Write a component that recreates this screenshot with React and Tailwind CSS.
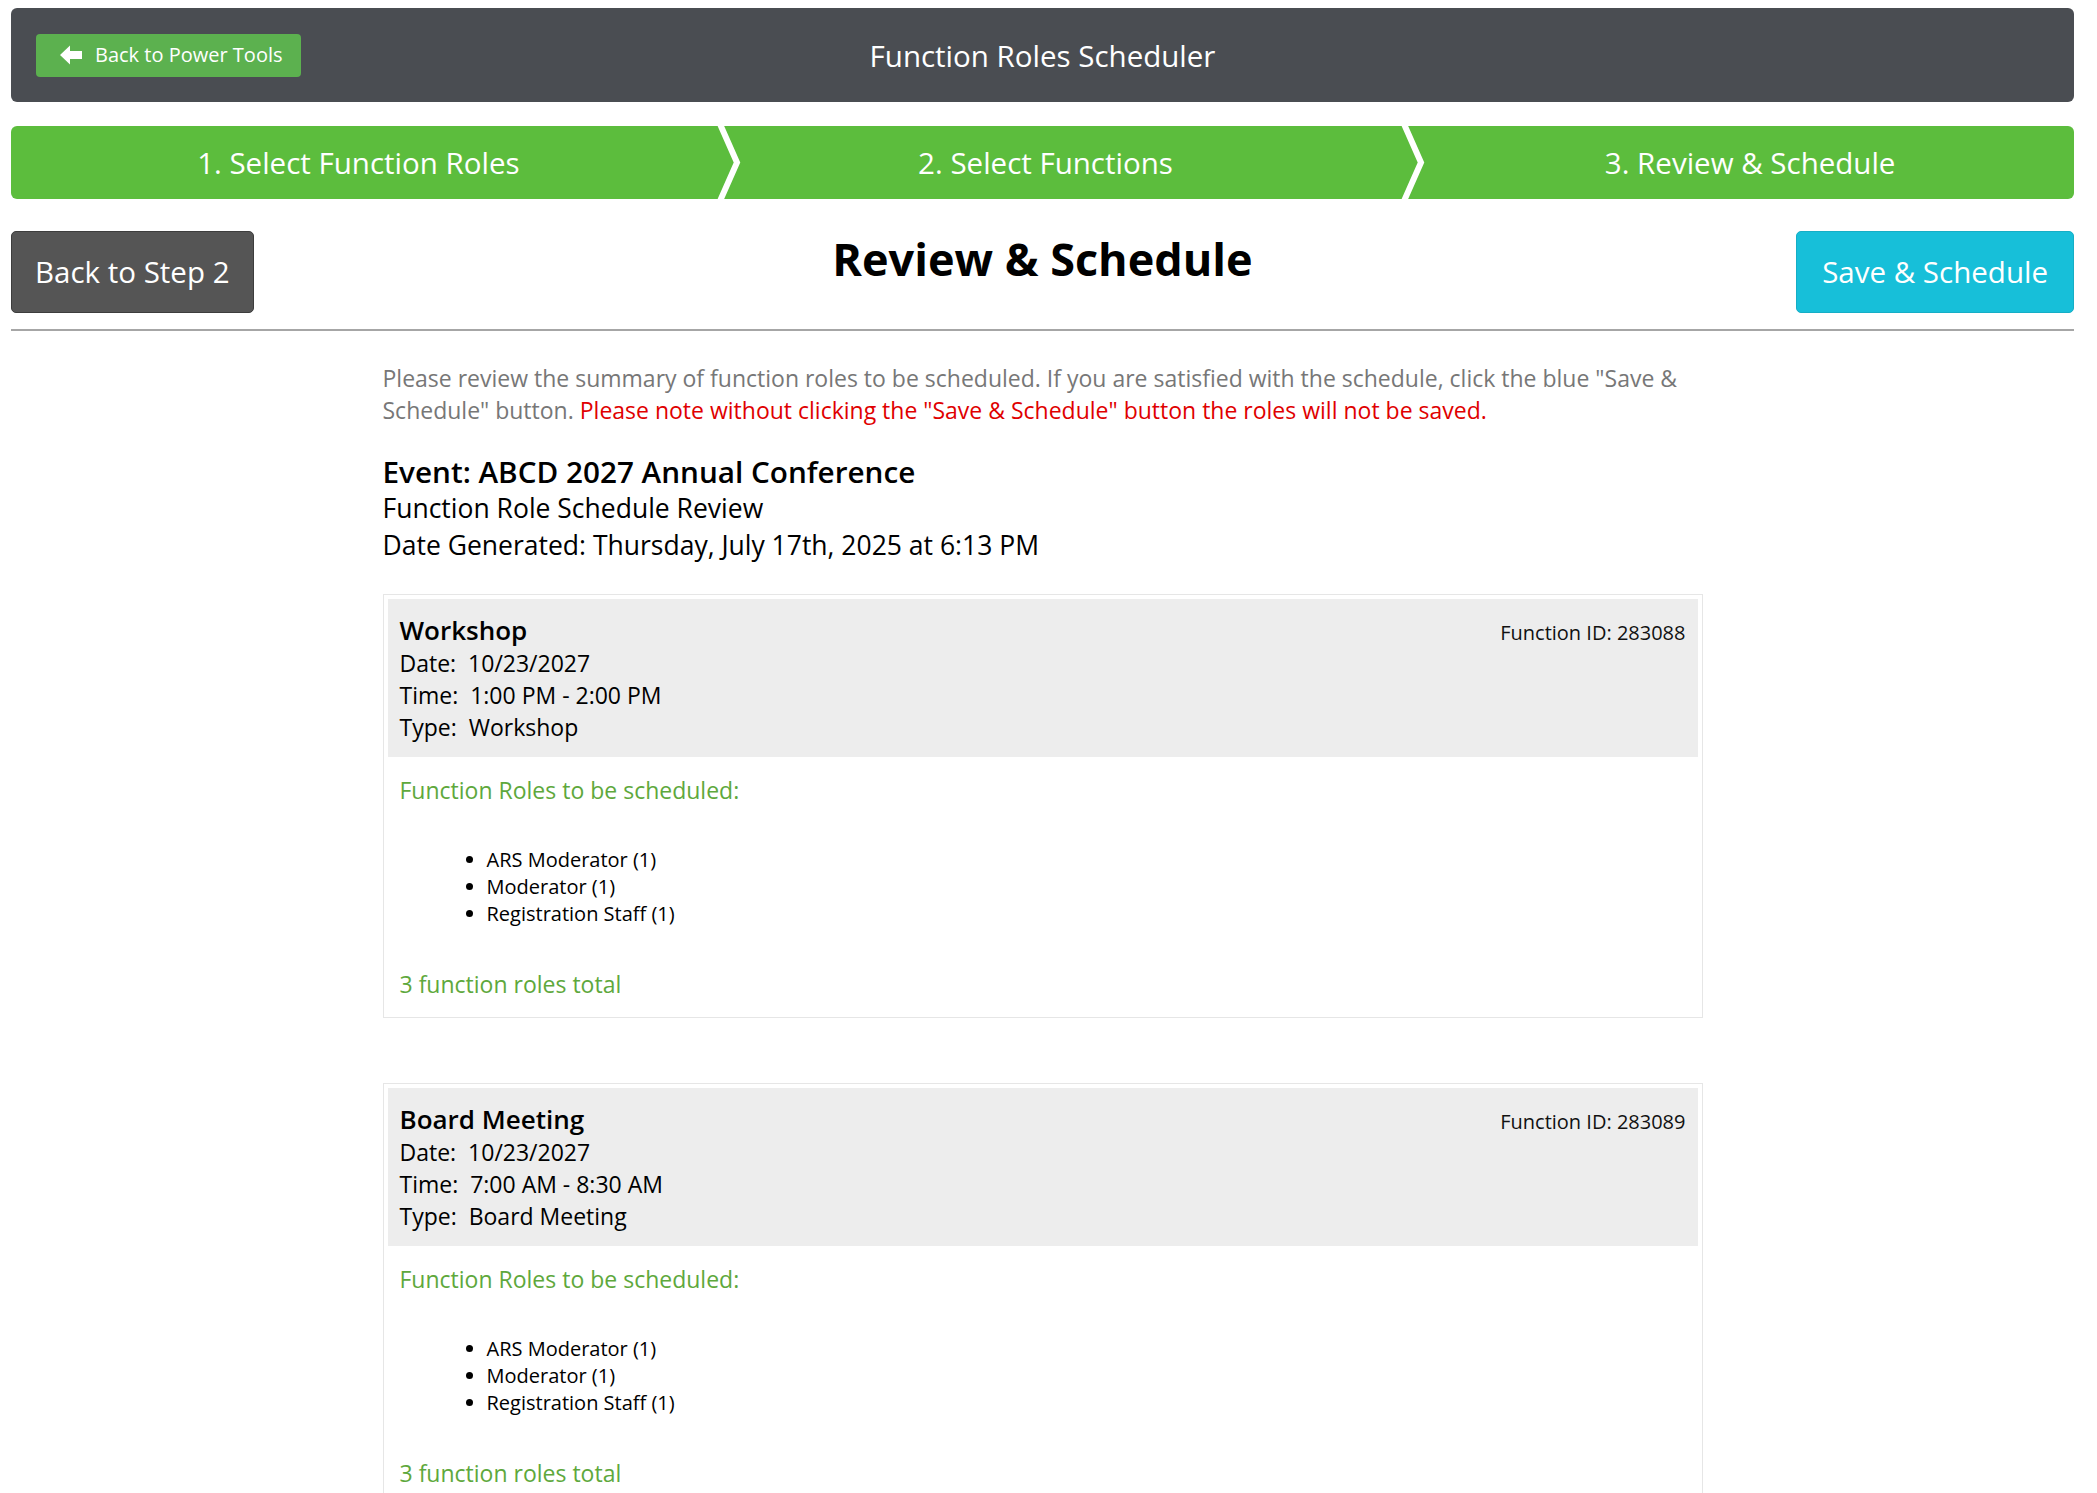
import React from "react";

function ArrowLeft() {
  return (
    <svg width="23" height="20" viewBox="0 0 23 20" className="shrink-0">
      <polygon points="0,10 10,0.5 10,6 22,6 22,14 10,14 10,19.5" fill="#ffffff" />
    </svg>
  );
}

function Chevron({ left }) {
  return (
    <svg
      width="26"
      height="73"
      viewBox="0 0 26 73"
      className={`absolute top-0 ${left}`}
    >
      <polyline points="3,-2 20,36.5 3,75" fill="none" stroke="#ffffff" strokeWidth="6" />
    </svg>
  );
}

const roles = ["ARS Moderator (1)", "Moderator (1)", "Registration Staff (1)"];

function FunctionCard({ title, id, date, time, type, className = "" }) {
  return (
    <div className={`border border-[#e6e6e6] p-[4px] ${className}`}>
      <div className="bg-[#ededed] pl-[12px] pr-[12px] py-[14px] flex justify-between items-start">
        <div className="text-black">
          <div className="text-[26px] leading-[34px] font-semibold">{title}</div>
          <div className="text-[23px] leading-[32px]">{`Date:\u00a0 ${date}`}</div>
          <div className="text-[23px] leading-[32px]">{`Time:\u00a0 ${time}`}</div>
          <div className="text-[23px] leading-[32px]">{`Type:\u00a0 ${type}`}</div>
        </div>
        <div className="text-[20px] leading-[34px] mt-[3px] text-[#111]">Function ID: {id}</div>
      </div>
      <div className="pl-[12px] pt-[17px] pb-[13px]">
        <div className="text-[23px] leading-[32px] text-[#5ea83c]">Function Roles to be scheduled:</div>
        <ul className="list-disc pl-[87px] mt-[40px] text-[20px] leading-[27px] text-black">
          {roles.map((r) => (
            <li key={r}>{r}</li>
          ))}
        </ul>
        <div className="mt-[41px] text-[23px] leading-[32px] text-[#5ea83c]">3 function roles total</div>
      </div>
    </div>
  );
}

export default function App() {
  return (
    <div className="font-['Open_Sans',sans-serif] bg-white min-h-screen pl-[11px] pr-[23px] pt-[8px]">
      <header className="h-[94px] rounded-[6px] bg-[#4a4d52] grid grid-cols-[1fr_auto_1fr] items-center px-[25px]">
        <div>
          <button className="h-[43px] rounded-[4px] bg-[#5cb14f] flex items-center gap-[12px] pl-[24px] pr-[18px] text-white text-[20px]">
            <ArrowLeft />
            <span>Back to Power Tools</span>
          </button>
        </div>
        <div className="text-white text-[29.5px] text-center pt-[2px]">Function Roles Scheduler</div>
        <div />
      </header>

      <div className="relative mt-[24px] h-[73px] rounded-[6px] bg-[#5cbd3d] flex text-white text-[29.5px]">
        <div className="w-1/3 flex items-center justify-center pl-[7px] pt-[2px]">1. Select Function Roles</div>
        <div className="w-1/3 flex items-center justify-center pl-[6px] pt-[2px]">2. Select Functions</div>
        <div className="w-1/3 flex items-center justify-center pl-[40px] pt-[2px]">3. Review &amp; Schedule</div>
        <Chevron left="left-[706px]" />
        <Chevron left="left-[1390px]" />
      </div>

      <div className="mt-[32px] grid grid-cols-[1fr_auto_1fr] items-start">
        <div>
          <button className="h-[82px] px-[23px] rounded-[5px] bg-[#555555] border border-[#3d3d3d] text-white text-[29.5px]">
            Back to Step 2
          </button>
        </div>
        <h1 className="text-[45px] leading-[60px] font-bold text-black -mt-[2px] text-center">Review &amp; Schedule</h1>
        <div className="flex justify-end">
          <button className="h-[82px] px-[25px] rounded-[5px] bg-[#17bfd9] border border-[#15aec6] text-white text-[29.5px]">
            Save &amp; Schedule
          </button>
        </div>
      </div>

      <div className="mt-[16px] h-[2px] bg-[#a6a6a6]" />

      <main className="w-[1320px] mx-auto pt-[31px] pb-[40px]">
        <p className="text-[23px] leading-[32px] text-[#777777]">
          Please review the summary of function roles to be scheduled. If you are satisfied with the schedule, click
          the blue "Save &amp; Schedule" button.{" "}
          <span className="text-[#e00000]">
            Please note without clicking the "Save &amp; Schedule" button the roles will not be saved.
          </span>
        </p>

        <div className="mt-[27px] text-black">
          <div className="text-[29.7px] leading-[37px] font-semibold">Event: ABCD 2027 Annual Conference</div>
          <div className="text-[26.5px] leading-[37px]">Function Role Schedule Review</div>
          <div className="text-[26.5px] leading-[37px]">Date Generated: Thursday, July 17th, 2025 at 6:13 PM</div>
        </div>

        <FunctionCard
          className="mt-[30px]"
          title="Workshop"
          id="283088"
          date="10/23/2027"
          time="1:00 PM - 2:00 PM"
          type="Workshop"
        />
        <FunctionCard
          className="mt-[65px]"
          title="Board Meeting"
          id="283089"
          date="10/23/2027"
          time="7:00 AM - 8:30 AM"
          type="Board Meeting"
        />
      </main>
    </div>
  );
}
